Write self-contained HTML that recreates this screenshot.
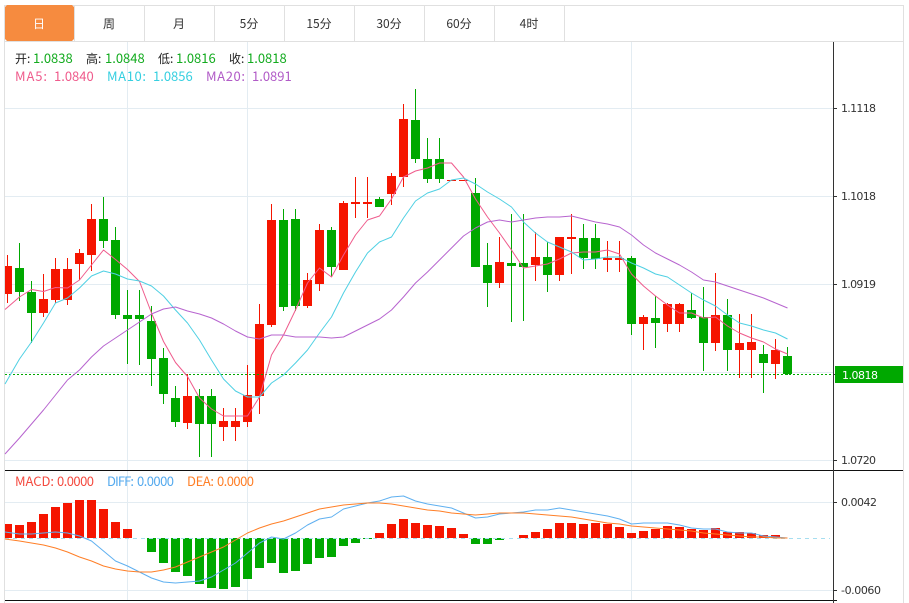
<!DOCTYPE html>
<html lang="zh"><head><meta charset="utf-8"><title>K线图</title>
<style>
html,body{margin:0;padding:0;background:#fff;width:909px;height:603px;overflow:hidden}
svg{display:block}
text{font-family:"Noto Sans CJK SC","Liberation Sans",sans-serif;font-size:13px}
.t{font-size:12px;fill:#333;text-anchor:middle}
.a{font-family:"DejaVu Sans","Liberation Sans",sans-serif;font-size:11px;fill:#333}
.k{fill:#222}.g{fill:#13ab1f}
</style></head><body>
<svg width="909" height="603" viewBox="0 0 909 603" xmlns="http://www.w3.org/2000/svg" shape-rendering="crispEdges">
<path d="M127.5 42V600M247.5 42V600M631.5 42V600M5 108.500H833M5 196.500H833M5 284.500H833M5 372.500H833M5 460.500H833M5 502.500H833M5 590.500H833" stroke="#e3ecf2" fill="none"/>
<path d="M4.500 5V603M903.500 5V603M4 5.500H904M4 41.500H904M144.500 5V41M214.500 5V41M284.500 5V41M354.500 5V41M424.500 5V41M494.500 5V41M564.500 5V41M74.500 5V41" stroke="#e0e0e0" fill="none"/>
<path d="M5 8a3 3 0 0 1 3-3h63a3 3 0 0 1 3 3v30a3 3 0 0 1-3 3H8a3 3 0 0 1-3-3z" fill="#f68b3f"/>
<g shape-rendering="auto">
<text class="t" x="39" y="28" style="fill:#fff">日</text>
<text class="t" x="109" y="28">周</text>
<text class="t" x="179" y="28">月</text>
<text class="t" x="249" y="28">5分</text>
<text class="t" x="319" y="28">15分</text>
<text class="t" x="389" y="28">30分</text>
<text class="t" x="459" y="28">60分</text>
<text class="t" x="529" y="28">4时</text>
</g>
<!-- red candles -->
<path stroke="#f51500" fill="none" d="M7.500 255V303M43.500 274V317M55.500 258V303M67.500 258V305M79.500 249V280M91.500 204V271M187.500 374V429M223.500 408V441M235.500 408V441M247.500 365V427M259.500 304V414M271.500 204V327M307.500 273V308M319.500 224V291M343.500 201V270M355.500 177V218M367.500 177V218M391.500 173V205M403.500 104V187M499.500 237V288M535.500 232V281M559.500 237V281M571.500 214V274M607.500 241V272M619.500 241V272M643.500 315V350M667.500 303V332M679.500 303V332M715.500 273V351M739.500 314V378M751.500 314V378M775.500 339V379"/>
<path fill="#f51500" d="M5 266h7v28h-7zM39 299h9v14h-9zM51 269h9v31h-9zM63 269h9v31h-9zM75 253h9v11h-9zM87 219h9v36h-9zM183 396h9v27h-9zM219 421h9v6h-9zM231 421h9v6h-9zM243 395h9v27h-9zM255 324h9v72h-9zM267 220h9v105h-9zM303 280h9v26h-9zM315 230h9v54h-9zM339 203h9v67h-9zM351 202h9v2h-9zM363 202h9v2h-9zM387 176h9v18h-9zM399 119h9v58h-9zM447 180h9v1h-9zM459 180h9v1h-9zM495 262h9v21h-9zM531 257h9v8h-9zM555 237h9v38h-9zM567 237h9v2h-9zM603 258h9v2h-9zM615 258h9v2h-9zM639 317h9v7h-9zM663 304h9v20h-9zM675 304h9v20h-9zM711 315h9v28h-9zM735 343h9v7h-9zM747 342h9v8h-9zM771 350h9v14h-9z"/>
<!-- green candles -->
<path stroke="#00a800" fill="none" d="M19.500 243V301M31.500 281V343M103.500 197V248M115.500 227V319M127.500 290V364M139.500 290V365M151.500 306V386M163.500 348V404M175.500 386V427M199.500 389V457M211.500 389V457M283.500 209V311M295.500 209V311M331.500 227V277M379.500 197V207M415.500 89V163M427.500 138V183M439.500 138V183M475.500 178V267M487.500 243V307M511.500 214V322M523.500 214V321M547.500 242V292M583.500 224V269M595.500 224V269M631.500 256V335M655.500 296V348M691.500 293V319M703.500 287V371M727.500 299V371M763.500 345V393M787.500 347V375"/>
<path fill="#00a800" d="M15 268h9v24h-9zM27 292h9v21h-9zM99 219h9v22h-9zM111 240h9v75h-9zM123 315h9v4h-9zM135 315h9v4h-9zM147 321h9v38h-9zM159 358h9v36h-9zM171 398h9v24h-9zM195 396h9v28h-9zM207 396h9v28h-9zM279 220h9v87h-9zM291 219h9v87h-9zM327 230h9v37h-9zM375 199h9v8h-9zM411 120h9v39h-9zM423 159h9v20h-9zM435 159h9v20h-9zM471 193h9v74h-9zM483 265h9v18h-9zM507 263h9v3h-9zM519 263h9v4h-9zM543 257h9v18h-9zM579 238h9v20h-9zM591 238h9v21h-9zM627 258h9v66h-9zM651 318h9v5h-9zM687 310h9v8h-9zM699 317h9v26h-9zM723 315h9v35h-9zM759 354h9v9h-9zM783 356h9v18h-9z"/>
<!-- last price dotted -->
<path d="M5 374.500H833" stroke="#00a800" stroke-dasharray="2 2" fill="none"/>
<!-- MA lines -->
<g fill="none" stroke-width="1" shape-rendering="auto" stroke-linejoin="round">
<polyline stroke="#ef5b8c" points="5,309.500 19.500,297 31.500,289.500 43.500,291.500 55.500,287.500 67.500,288 79.500,280 91.500,265 103.500,250 115.500,259.500 127.500,269.500 139.500,281.500 151.500,313 163.500,341.500 175.500,362.500 187.500,376.500 199.500,398 211.500,409 223.500,416 235.500,416 247.500,416 259.500,397 271.500,355 283.500,335 295.500,310 307.500,283 319.500,268 331.500,277 343.500,255 355.500,235 367.500,220 379.500,216 391.500,199 403.500,177 415.500,171 427.500,168 439.500,163 451.500,163 463.500,177 475.500,199 487.500,217 499.500,233 511.500,250 523.500,268 535.500,266 547.500,264 559.500,259 571.500,253 583.500,252 595.500,252 607.500,250 619.500,254 631.500,274 643.500,286 655.500,296 667.500,305 679.500,313 691.500,313 703.500,318 715.500,317 727.500,326 739.500,333 751.500,338 763.500,342 775.500,349 787.500,354"/>
<polyline stroke="#4fd0e3" points="5,384 19.500,359 31.500,342 43.500,323 55.500,303 67.500,298 79.500,288 91.500,276 103.500,271 115.500,274 127.500,279 139.500,281 151.500,286 163.500,296 175.500,310 187.500,323 199.500,340 211.500,360 223.500,379 235.500,391 247.500,397 259.500,397 271.500,383 283.500,375 295.500,363 307.500,350 319.500,333 331.500,317 343.500,293 355.500,272 367.500,253 379.500,242 391.500,237 403.500,218 415.500,201 427.500,193 439.500,189 451.500,180 463.500,178 475.500,184 487.500,192 499.500,199 511.500,207 523.500,222 535.500,233 547.500,242 559.500,247 571.500,252 583.500,260 595.500,259 607.500,257 619.500,257 631.500,263 643.500,268 655.500,274 667.500,277 679.500,285 691.500,293 703.500,300 715.500,306 727.500,315 739.500,323 751.500,326 763.500,330 775.500,333 787.500,339"/>
<polyline stroke="#b764cf" points="5,454 19.500,438 31.500,424 43.500,410 55.500,395 67.500,380 79.500,370 91.500,357 103.500,346 115.500,338 127.500,330 139.500,322 151.500,314 163.500,309 175.500,307 187.500,311 199.500,314 211.500,318 223.500,324 235.500,331 247.500,337 259.500,339 271.500,335 283.500,335 295.500,337 307.500,337 319.500,337 331.500,338 343.500,337 355.500,331 367.500,325 379.500,319 391.500,310 403.500,297 415.500,283 427.500,272 439.500,260 451.500,248 463.500,236 475.500,228 487.500,222 499.500,220 511.500,222 523.500,220 535.500,218 547.500,217 559.500,217 571.500,216 583.500,219 595.500,222 607.500,224 619.500,227 631.500,235 643.500,245 655.500,253 667.500,259 679.500,265 691.500,272 703.500,280 715.500,282 727.500,286 739.500,290 751.500,294 763.500,298 775.500,303 787.500,308"/>
</g>
<!-- axis separators -->
<path d="M5 470.500H903M5 600.500H837" stroke="#111" fill="none"/>
<path d="M833.500 42V603M834 108.500H837M834 196.500H837M834 284.500H837M834 374.500H837M834 460.500H837M834 502.500H837M834 590.500H837" stroke="#333" fill="none"/>
<!-- MACD bars -->
<path fill="#f51500" d="M5 524h7v14h-7zM15 525h9v13h-9zM27 522h9v16h-9zM39 514h9v24h-9zM51 507h9v31h-9zM63 503h9v35h-9zM75 500h9v38h-9zM87 500h9v38h-9zM99 509h9v29h-9zM111 522h9v16h-9zM123 529h9v9h-9zM375 533h9v5h-9zM387 524h9v14h-9zM399 519h9v19h-9zM411 523h9v15h-9zM423 525h9v13h-9zM435 526h9v12h-9zM447 528h9v10h-9zM459 534h9v4h-9zM519 535h9v3h-9zM531 532h9v6h-9zM543 529h9v9h-9zM555 523h9v15h-9zM567 523h9v15h-9zM579 524h9v14h-9zM591 523h9v15h-9zM603 524h9v14h-9zM615 527h9v11h-9zM627 533h9v5h-9zM639 531h9v7h-9zM651 529h9v9h-9zM663 526h9v12h-9zM675 527h9v11h-9zM687 529h9v9h-9zM699 530h9v8h-9zM711 528h9v10h-9zM723 532h9v6h-9zM735 532h9v6h-9zM747 533h9v5h-9zM759 535h9v3h-9zM771 535h9v3h-9z"/>
<path fill="#00a800" d="M147 538h9v14h-9zM159 538h9v25h-9zM171 538h9v34h-9zM183 538h9v38h-9zM195 538h9v46h-9zM207 538h9v50h-9zM219 538h9v51h-9zM231 538h9v49h-9zM243 538h9v41h-9zM255 538h9v30h-9zM267 538h9v25h-9zM279 538h9v35h-9zM291 538h9v33h-9zM303 538h9v26h-9zM315 538h9v20h-9zM327 538h9v19h-9zM339 538h9v8h-9zM351 538h9v5h-9zM363 538h9v1h-9zM471 538h9v6h-9zM483 538h9v6h-9zM495 538h9v2h-9z"/>
<path d="M5 538.500H830" stroke="#a6def0" stroke-dasharray="4 4" fill="none"/>
<g fill="none" stroke-width="1" shape-rendering="auto" stroke-linejoin="round">
<polyline stroke="#5fb0f0" points="5,532 19.500,534 31.500,534 43.500,533 55.500,532 67.500,533 79.500,536 91.500,541 103.500,551 115.500,561 127.500,566 139.500,572 151.500,578 163.500,582 175.500,583 187.500,582 199.500,581 211.500,577 223.500,570 235.500,563 247.500,553 259.500,543 271.500,537 283.500,539 295.500,533 307.500,525 319.500,519 331.500,517 343.500,509 355.500,506 367.500,503 379.500,501 391.500,497 403.500,496 415.500,501 427.500,504 439.500,506 451.500,508 463.500,513 475.500,518 487.500,517 499.500,514 511.500,513 523.500,512 535.500,510 547.500,510 559.500,508 571.500,510 583.500,512 595.500,514 607.500,516 619.500,519 631.500,524 643.500,523 655.500,523 667.500,523 679.500,525 691.500,528 703.500,529 715.500,529 727.500,532 739.500,533 751.500,533 763.500,536 775.500,537 787.500,538"/>
<polyline stroke="#ff7f27" points="5,539 19.500,541 31.500,543 43.500,545 55.500,548 67.500,552 79.500,557 91.500,561 103.500,566 115.500,569 127.500,571 139.500,572 151.500,572 163.500,570 175.500,567 187.500,562 199.500,557 211.500,552 223.500,547 235.500,540 247.500,533 259.500,528 271.500,524 283.500,521 295.500,517 307.500,513 319.500,509 331.500,507 343.500,505 355.500,504 367.500,503 379.500,503 391.500,504 403.500,506 415.500,508 427.500,510 439.500,511 451.500,513 463.500,514 475.500,515 487.500,514 499.500,513 511.500,513 523.500,513 535.500,514 547.500,515 559.500,516 571.500,517 583.500,519 595.500,521 607.500,523 619.500,524 631.500,526 643.500,527 655.500,528 667.500,529 679.500,530 691.500,531 703.500,533 715.500,534 727.500,535 739.500,536 751.500,537 763.500,537 775.500,538 787.500,538"/>
</g>
<rect x="835" y="366" width="68" height="17" fill="#00a800"/>
<g shape-rendering="auto">
<text class="a" x="841" y="112" textLength="35">1.1118</text>
<text class="a" x="841" y="200" textLength="35">1.1018</text>
<text class="a" x="841" y="288" textLength="35">1.0919</text>
<text class="a" x="842" y="379" textLength="36" style="fill:#fff">1.0818</text>
<text class="a" x="841" y="464" textLength="35">1.0720</text>
<text class="a" x="841" y="506" textLength="36">0.0042</text>
<text class="a" x="841" y="594" textLength="40">-0.0060</text>
<text class="k" x="15" y="63" style="font-size:12px">开:</text><text class="g" x="33" y="63">1.0838</text>
<text class="k" x="86" y="63" style="font-size:12px">高:</text><text class="g" x="105" y="63">1.0848</text>
<text class="k" x="158" y="63" style="font-size:12px">低:</text><text class="g" x="176" y="63">1.0816</text>
<text class="k" x="229" y="63" style="font-size:12px">收:</text><text class="g" x="247" y="63">1.0818</text>
<text x="15" y="81" fill="#ef5b8c" textLength="32">MA5:</text><text x="54" y="81" fill="#ef5b8c">1.0840</text>
<text x="107" y="81" fill="#36cfe0" textLength="39">MA10:</text><text x="153" y="81" fill="#36cfe0">1.0856</text>
<text x="206" y="81" fill="#b15bc7" textLength="39">MA20:</text><text x="252" y="81" fill="#b15bc7">1.0891</text>
<text x="15" y="486" fill="#f44b40" textLength="39">MACD:</text><text x="57" y="486" fill="#f44b40" textLength="37">0.0000</text>
<text x="107" y="486" fill="#55aaee" textLength="27">DIFF:</text><text x="137" y="486" fill="#55aaee" textLength="37">0.0000</text>
<text x="187" y="486" fill="#ff7f27" textLength="27">DEA:</text><text x="217" y="486" fill="#ff7f27" textLength="37">0.0000</text>
</g>
</svg>
</body></html>
